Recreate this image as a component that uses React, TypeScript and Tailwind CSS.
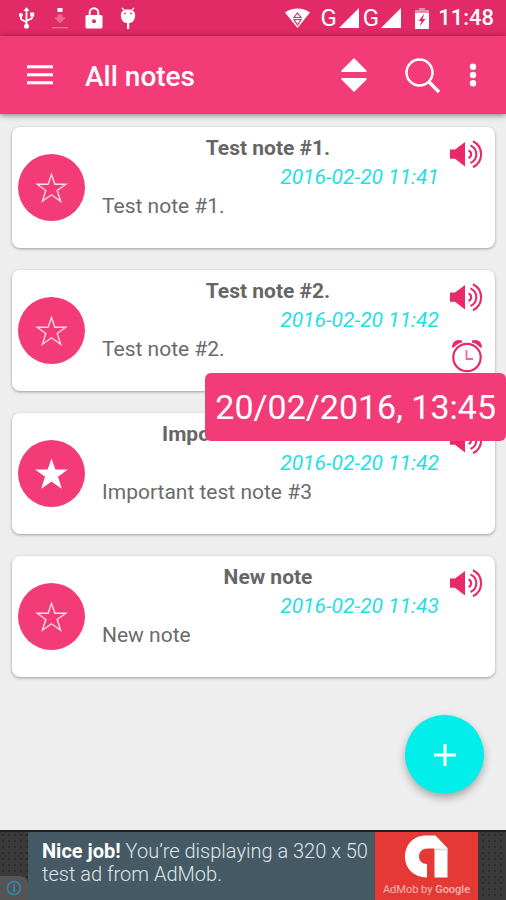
import { clsx } from 'clsx';

interface Note {
  id: number;
  title: string;
  date: string;
  text: string;
  starred?: boolean;
  reminder?: string;
}

const notes: Note[] = [
  { id: 1, title: 'Test note #1.', date: '2016-02-20 11:41', text: 'Test note #1.' },
  { id: 2, title: 'Test note #2.', date: '2016-02-20 11:42', text: 'Test note #2.', reminder: '20/02/2016, 13:45' },
  { id: 3, title: 'Important test note #3', date: '2016-02-20 11:42', text: 'Important test note #3', starred: true },
  { id: 4, title: 'New note', date: '2016-02-20 11:43', text: 'New note' },
];

function Signal() {
  return (
    <div className="flex items-center gap-0.5">
      <span className="text-2xl leading-6">G</span>
      <svg width="20" height="20" viewBox="0 0 20 20" fill="currentColor">
        <path d="M20 0v20H0z" />
      </svg>
    </div>
  );
}

function StatusBar() {
  return (
    <div className="flex h-9 items-center justify-between bg-[#e12a66] pr-3 pl-[18px] text-white">
      <div className="flex items-center gap-[17px]">
        {/* USB */}
        <svg width="17" height="22" viewBox="0 0 17 22" fill="none" stroke="currentColor" strokeWidth="1.8">
          <path d="M8.5 3v15M2.8 9v2.5c0 2 5.7 2.2 5.7 4.5M14.2 8v2.5c0 2.2-5.7 2-5.7 4" />
          <path d="M8.5 0l3 4h-6z" fill="currentColor" stroke="none" />
          <circle cx="2.8" cy="8" r="2" fill="currentColor" stroke="none" />
          <path d="M12.2 5.5h4v4h-4z" fill="currentColor" stroke="none" />
          <circle cx="8.5" cy="19.3" r="2.5" fill="currentColor" stroke="none" />
        </svg>
        {/* Download */}
        <svg width="16" height="22" viewBox="0 0 16 22" fill="currentColor">
          <path d="M5.5 1h5v4h-5z" />
          <path d="M5.5 7.5h5v3h3.5l-6 6-6-6h3.5zM0 20h16v1.5H0z" opacity=".3" />
        </svg>
        {/* Lock */}
        <svg width="18" height="22" viewBox="0 0 18 22">
          <path d="M4.7 9V5.5a4.3 4.3 0 0 1 8.6 0V9" fill="none" stroke="currentColor" strokeWidth="2" />
          <rect x=".5" y="8" width="17" height="13.5" rx="1.5" fill="currentColor" />
          <circle cx="9" cy="14.3" r="2" fill="#e12a66" />
        </svg>
        {/* Debug */}
        <svg width="16" height="22" viewBox="0 0 16 22" fill="currentColor">
          <path d="M2 1l3 3M14 1l-3 3" stroke="currentColor" strokeWidth="1.3" />
          <path d="M.8 8C.8 4.5 4 2.5 8 2.5S15.2 4.5 15.2 8c0 4.500-2.700 8-5.700 8h-3C3.500 16 .8 12.500.8 8z" />
          <path d="M7 15h2.200v7H7z" />
          <circle cx="5" cy="6.500" r=".9" fill="#e12a66" />
          <circle cx="11" cy="6.500" r=".9" fill="#e12a66" />
        </svg>
      </div>
      <div className="flex items-center">
        <svg className="mr-2.5" width="25" height="20" viewBox="0 0 25 20">
          <path d="M0 4.500C7-1 18-1 25 4.500L12.500 20z" fill="currentColor" />
          <path d="M12.500 5l3.500 4.500H9zM12.500 17L9 11.500h7z" fill="none" stroke="#e12a66" strokeWidth="1.200" />
        </svg>
        <div className="mr-[13px] flex gap-1">
          <Signal />
          <Signal />
        </div>
        <svg className="mr-2" width="16" height="21" viewBox="0 0 16 21">
          <path d="M5 0h6v2h4v4H1V2h4z" fill="currentColor" opacity=".45" />
          <path d="M1 5h14v16H1z" fill="currentColor" />
          <path d="M10.500 5.500L4.500 13h3l-2 5.500 6-7.500h-3z" fill="#e12a66" />
        </svg>
        <span className="text-[22px] leading-6 font-medium">11:48</span>
      </div>
    </div>
  );
}

function AppBar() {
  return (
    <header className="relative flex h-[78px] items-center bg-[#f33b78] pr-7 pl-[27px] text-white shadow-[0_1px_6px_rgba(0,0,0,0.5)]">
      <button aria-label="Open menu">
        <svg width="26" height="20" viewBox="0 0 26 20" fill="currentColor">
          <path d="M0 .3h26v3H0zM0 8.300h26v3H0zM0 16.300h26v3H0z" />
        </svg>
      </button>
      <h1 className="ml-8 flex-1 pt-1 text-[28px] leading-8 font-medium">All notes</h1>
      <button aria-label="Sort">
        <svg width="26" height="34" viewBox="0 0 26 34" fill="currentColor">
          <path d="M13 0l12.500 12.500V14H.5v-1.500zM13 34L.5 21.500V20h25v1.500z" />
        </svg>
      </button>
      <button className="ml-[38px]" aria-label="Search">
        <svg width="35" height="35" viewBox="0 0 35 35" fill="none" stroke="currentColor">
          <circle cx="14.500" cy="14.500" r="13" strokeWidth="2.500" />
          <path d="M23.500 23.500L34 34" strokeWidth="3.500" />
        </svg>
      </button>
      <button className="ml-7" aria-label="More options">
        <svg width="10" height="24" viewBox="0 0 10 24" fill="currentColor">
          <circle cx="5" cy="3.800" r="3.200" />
          <circle cx="5" cy="12" r="3.200" />
          <circle cx="5" cy="20.200" r="3.200" />
        </svg>
      </button>
    </header>
  );
}

function SpeakerIcon() {
  return (
    <svg width="34" height="28" viewBox="0 0 34 28">
      <path d="M0 9.500h5L15 2v24.500L5 18.800H0z" fill="currentColor" />
      <path
        d="M18.500 10.500a4 4 0 0 1 0 7.500M20.500 5.500a9.500 9.500 0 0 1 0 17.500M23 1.200a14.500 14.500 0 0 1 0 26"
        fill="none"
        stroke="currentColor"
        strokeWidth="2.100"
      />
    </svg>
  );
}

function AlarmIcon() {
  return (
    <svg width="32" height="34" viewBox="0 0 32 34">
      <path d="M1 8.500C1 3 5-.5 11 1.500V3.500C7 4.500 5 6 3 8.500zM31 8.500C31 3 27-.5 21 1.500V3.500C25 4.500 27 6 29 8.500z" fill="currentColor" />
      <circle cx="16" cy="18.500" r="13.700" fill="none" stroke="currentColor" strokeWidth="2.200" />
      <path d="M15.500 11v9H22" fill="none" stroke="currentColor" strokeWidth="1.800" opacity=".7" />
    </svg>
  );
}

function NoteCard({ note }: { note: Note }) {
  return (
    <li className="relative flex h-[121px] rounded-lg bg-white pr-[11px] pl-1.5 shadow-[0_1px_3px_rgba(0,0,0,0.35)]">
      <button
        className="flex h-[67px] w-[67px] shrink-0 items-center justify-center self-center rounded-full bg-[#f33b78] text-white"
        aria-label={note.starred ? 'Remove star' : 'Add star'}
      >
        <svg width="34" height="34" viewBox="0 0 34 34">
          <path
            d="M16.500 3.500L19.900 13.200H30.800L22.200 19.400L25.600 30.300L16.500 23.800L7.400 30.300L10.800 19.400L2.200 13.200H13.100z"
            className={clsx(note.starred ? 'fill-white stroke-white' : 'fill-none stroke-[#ffdce8]')}
            strokeWidth="1.400"
          />
        </svg>
      </button>
      <div className="ml-3 min-w-0 flex-1 pt-[7px] text-[21px] leading-[29px] text-[#6b6b6b]">
        <h2 className="text-center font-bold text-[#666666]">{note.title}</h2>
        <p className="text-right text-[#1fe0e4] italic">{note.date}</p>
        <p className="pl-[5px]">{note.text}</p>
      </div>
      <div className="ml-[11px] flex w-[34px] flex-col items-center gap-7 pt-[13px] text-[#e92a68]">
        <button aria-label="Read aloud">
          <SpeakerIcon />
        </button>
        {note.reminder && (
          <button aria-label="Reminder">
            <AlarmIcon />
          </button>
        )}
      </div>
      {note.reminder && (
        <div
          role="tooltip"
          className="absolute top-[103px] -right-[11px] z-10 rounded-md bg-[#f33b78] px-2.5 py-3.5 text-[34px] leading-10 whitespace-nowrap text-white"
        >
          {note.reminder}
        </div>
      )}
    </li>
  );
}

function AdBanner() {
  return (
    <footer className="flex h-[70px] justify-center border-t-2 border-[#1c2022] bg-[#3a3a3a] bg-[radial-gradient(#2b2b2b_35%,transparent_36%)] bg-[length:6px_6px]">
      <div className="flex w-7 shrink-0 items-end">
        <button aria-label="Ad info" className="flex h-6 w-7 items-center justify-center rounded-tr-lg bg-[#555555] text-[#2a8cb4]">
          <svg width="16" height="16" viewBox="0 0 16 16" fill="none" stroke="currentColor" strokeWidth="1.500">
            <circle cx="8" cy="8" r="6.500" />
            <path d="M8 4v1.500M8 6.500V12" strokeWidth="2" />
          </svg>
        </button>
      </div>
      <a href="#" className="flex max-w-[450px] flex-1 bg-[#455a64]">
        <p className="flex-1 pt-2 pl-3.5 text-xl leading-[23px] font-light text-[#dfe6ea]">
          <strong className="font-bold text-white">Nice job!</strong> You’re displaying a 320 x 50 test ad from AdMob.
        </p>
        <div className="flex w-[103px] shrink-0 flex-col items-center bg-[#e53935] pt-[3px]">
          <svg width="43" height="43" viewBox="0 0 43 43" fill="white">
            <path d="M22 42.500C8 42 0 33 0 22C0 9 9 .5 21 .5h9.500L42.500 13V42.500H29.500V13.500H22.500C17.500 13.500 14 17 14 21.500C14 26 17 28.800 22 29z" />
            <path d="M29.500 13.500h13V15.500h-13z" fill="#dcdcdc" />
          </svg>
          <span className="mt-1 text-[11px] leading-4 whitespace-nowrap text-[#ffb5b0]">
            AdMob by <span className="font-medium">Google</span>
          </span>
        </div>
      </a>
      <div className="w-7 shrink-0" />
    </footer>
  );
}

export default function App() {
  return (
    <div className="flex min-h-screen flex-col bg-[#eeeeee] font-[Roboto,sans-serif]">
      <StatusBar />
      <AppBar />
      <main className="relative flex-1 pt-[13px] pr-[11px] pl-3">
        <ul className="flex flex-col gap-[22px]">
          {notes.map((note) => (
            <NoteCard key={note.id} note={note} />
          ))}
        </ul>
        <button
          aria-label="New note"
          className="absolute right-[22px] bottom-9 flex h-[79px] w-[79px] items-center justify-center rounded-full bg-[#02eeea] text-white shadow-[0_4px_8px_rgba(0,0,0,0.3)]"
        >
          <svg width="22" height="22" viewBox="0 0 22 22" fill="none" stroke="currentColor" strokeWidth="3">
            <path d="M11 0v22M0 11h22" />
          </svg>
        </button>
      </main>
      <AdBanner />
    </div>
  );
}
